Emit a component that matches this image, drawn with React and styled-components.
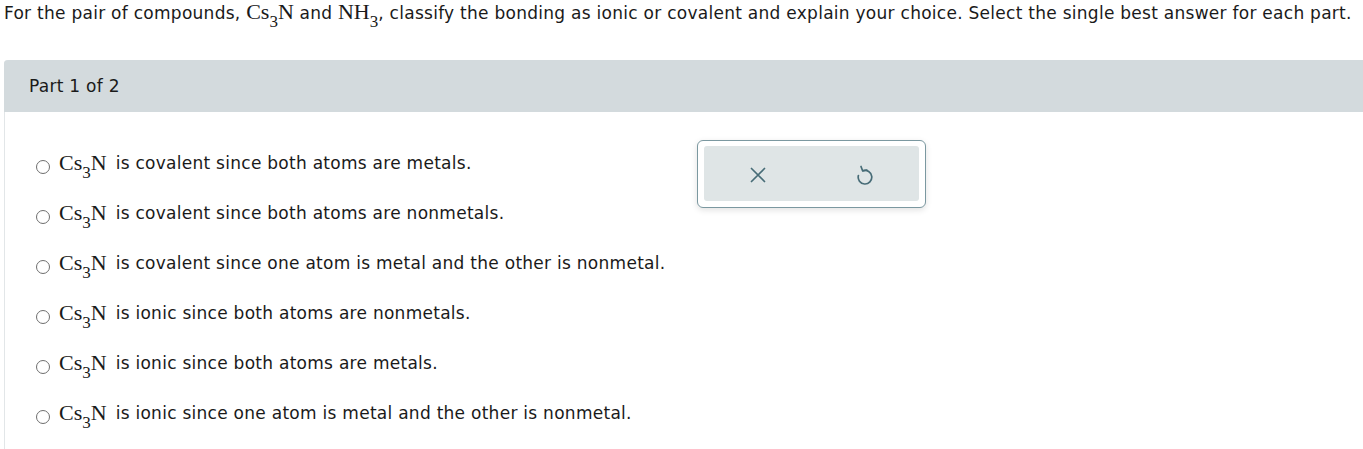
import React from 'react'
import styled, { createGlobalStyle } from 'styled-components'

const Global = createGlobalStyle`
  body {
    margin: 0;
    background: #fff;
    font-family: "DejaVu Sans", Verdana, sans-serif;
    letter-spacing: 0.27px;
    color: #1a1a1a;
  }
`

const Page = styled.div`
  padding: 0 0 0 4px;
`

const Question = styled.p`
  margin: 0;
  font-size: 17px;
  line-height: 24px;
  white-space: nowrap;
`

const Math = styled.span`
  font-family: "Liberation Serif", "Times New Roman", serif;
  font-size: 22px;
  letter-spacing: 0;
  sub {
    font-size: 17px;
    vertical-align: -8px;
    line-height: 0;
  }
`

const Panel = styled.section`
  margin-top: 35px;
  border-left: 1px solid #e2e6e8;
  border-top-left-radius: 4px;
  height: 390px;
`

const PanelHeader = styled.div`
  background: #d3dadd;
  height: 52px;
  display: flex;
  align-items: center;
  padding-left: 25px;
  font-size: 17px;
  border-top-left-radius: 4px;
  margin-left: -1px;
`

const Body = styled.div`
  display: flex;
  align-items: flex-start;
  padding-top: 26px;
`

const Options = styled.ul`
  list-style: none;
  margin: 0;
  padding: 0 0 0 31px;
  width: 661px;
`

const Option = styled.li`
  display: flex;
  align-items: center;
  height: 50px;
  font-size: 17px;
  white-space: nowrap;
`

const OptionText = styled.span`
  margin-left: 9px;
`

const Radio = styled.span`
  width: 12px;
  height: 12px;
  border: 1px solid #6e6e6e;
  border-radius: 50%;
  margin-right: 9px;
  margin-top: 8px;
  flex-shrink: 0;
`

const ToolBox = styled.div`
  margin-top: 2px;
  border: 1px solid #7b98a0;
  border-radius: 6px;
  padding: 5px 6px 6px 6px;
  box-shadow: 0 2px 6px rgba(0, 0, 0, 0.12);
  background: #fff;
`

const ToolInner = styled.div`
  display: flex;
  width: 215px;
  height: 55px;
  background: #dfe5e6;
  border-radius: 3px;
`

const ToolButton = styled.button`
  flex: 1;
  background: none;
  border: 0;
  display: flex;
  align-items: center;
  justify-content: center;
  padding: 0;
  color: #476c77;
  padding-top: 2px;
`

const options = [
  'is covalent since both atoms are metals.',
  'is covalent since both atoms are nonmetals.',
  'is covalent since one atom is metal and the other is nonmetal.',
  'is ionic since both atoms are nonmetals.',
  'is ionic since both atoms are metals.',
  'is ionic since one atom is metal and the other is nonmetal.',
]

function Cs3N() {
  return (
    <Math>
      Cs<sub>3</sub>N
    </Math>
  )
}

export default function App() {
  return (
    <Page>
      <Global />
      <Question>
        For the pair of compounds, <Cs3N /> and <Math>NH<sub>3</sub></Math>, classify the bonding as ionic or covalent and explain your choice. Select the single best answer for each part.
      </Question>
      <Panel>
        <PanelHeader>Part 1 of 2</PanelHeader>
        <Body>
          <Options>
            {options.map((text) => (
              <Option key={text}>
                <Radio />
                <Cs3N />
                <OptionText>{text}</OptionText>
              </Option>
            ))}
          </Options>
          <ToolBox>
            <ToolInner>
              <ToolButton aria-label="clear">
                <svg width="16" height="16" viewBox="0 0 16 16" fill="none" stroke="currentColor" strokeWidth="1.7" strokeLinecap="round">
                  <path d="M1.5 1.5 L14.5 14.5 M14.5 1.5 L1.5 14.5" />
                </svg>
              </ToolButton>
              <ToolButton aria-label="undo">
                <svg width="18" height="20" viewBox="0 0 18 20" fill="none" stroke="currentColor" strokeWidth="1.7" strokeLinecap="round" strokeLinejoin="round">
                  <path d="M7 5.7 A6.8 6.8 0 1 1 2.4 10.5" />
                  <path d="M5 1.5 L6.6 5.8 L10.8 5" />
                </svg>
              </ToolButton>
            </ToolInner>
          </ToolBox>
        </Body>
      </Panel>
    </Page>
  )
}
